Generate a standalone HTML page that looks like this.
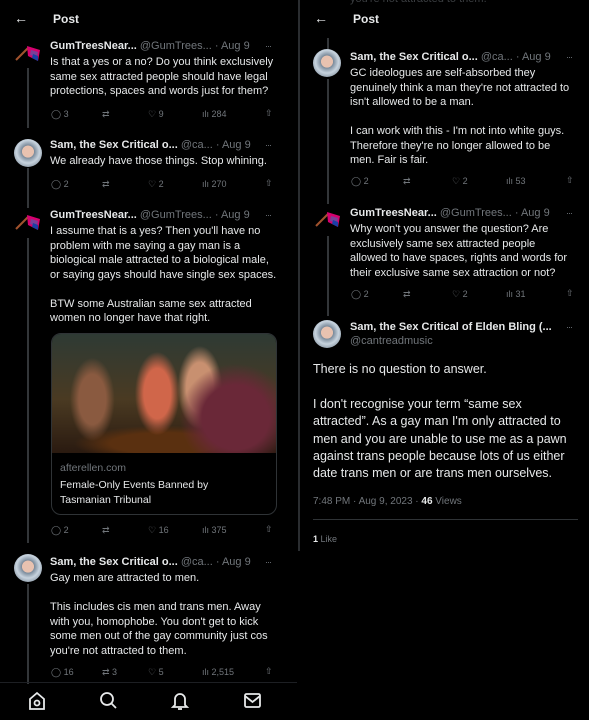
<!DOCTYPE html>
<html><head><meta charset="utf-8"><style>
*{margin:0;padding:0;box-sizing:border-box}
body{width:589px;height:720px;background:#000;position:relative;overflow:hidden;font-family:"Liberation Sans",sans-serif;color:#e7e9ea}
.a{position:absolute;white-space:nowrap}
.t{font-size:11px;line-height:14.5px}
.n{font-weight:bold;font-size:11px}
.g{color:#71767b}
.dots{position:absolute;color:#71767b;font-size:9px;letter-spacing:-1px}
.av{position:absolute;width:28px;height:28px;border-radius:50%;background:radial-gradient(circle at 50% 45%,#e8c2b0 0 28%,#7a8a9a 30%,#c7d3de 55%,#5c6b7a 100%)}
.act{position:absolute;font-size:9px;color:#71767b}
.vl{position:absolute;width:2px;background:#333639}
</style></head><body>
<!-- LEFT PANEL -->
<div class="a" style="left:14px;top:10px;font-size:14px">←</div>
<div class="a" style="left:53px;top:12px;font-size:12px;font-weight:bold">Post</div>

<div class="vl" style="left:27px;top:68px;height:60px"></div>
<svg class="a" style="left:14px;top:42px" width="28" height="22"><line x1="2" y1="18" x2="14" y2="6" stroke="#a0522d" stroke-width="2"/><path d="M13 4 L26 8 L24 19 L14 14Z" fill="#d6006f"/><path d="M17 8 L24 10 L23 15 L16 13Z" fill="#7b3f98"/><path d="M19 12 L24 14 L24 19 L18 16Z" fill="#1a3fa6"/></svg>
<div class="a n" style="left:50px;top:40px">GumTreesNear... <span class="g" style="font-weight:normal">@GumTrees... · Aug 9</span></div>
<div class="dots" style="left:265px;top:41px">···</div>
<div class="a t" style="left:50px;top:55px">Is that a yes or a no? Do you think exclusively<br>same sex attracted people should have legal<br>protections, spaces and words just for them?</div>
<div class="act" style="left:51px;top:109px">◯ 3</div><div class="act" style="left:102px;top:109px">⇄</div><div class="act" style="left:148px;top:109px">♡ 9</div><div class="act" style="left:202px;top:109px">ılı 284</div><div class="act" style="left:265px;top:108px">⇧</div>

<div class="av" style="left:14px;top:139px"></div>
<div class="vl" style="left:27px;top:168px;height:40px"></div>
<div class="a n" style="left:50px;top:139px">Sam, the Sex Critical o... <span class="g" style="font-weight:normal">@ca... · Aug 9</span></div>
<div class="dots" style="left:265px;top:140px">···</div>
<div class="a t" style="left:50px;top:154px">We already have those things. Stop whining.</div>
<div class="act" style="left:51px;top:179px">◯ 2</div><div class="act" style="left:102px;top:179px">⇄</div><div class="act" style="left:148px;top:179px">♡ 2</div><div class="act" style="left:202px;top:179px">ılı 270</div><div class="act" style="left:265px;top:178px">⇧</div>

<svg class="a" style="left:14px;top:211px" width="28" height="22"><line x1="2" y1="18" x2="14" y2="6" stroke="#a0522d" stroke-width="2"/><path d="M13 4 L26 8 L24 19 L14 14Z" fill="#d6006f"/><path d="M17 8 L24 10 L23 15 L16 13Z" fill="#7b3f98"/><path d="M19 12 L24 14 L24 19 L18 16Z" fill="#1a3fa6"/></svg>
<div class="vl" style="left:27px;top:238px;height:305px"></div>
<div class="a n" style="left:50px;top:209px">GumTreesNear... <span class="g" style="font-weight:normal">@GumTrees... · Aug 9</span></div>
<div class="dots" style="left:265px;top:210px">···</div>
<div class="a t" style="left:50px;top:224px">I assume that is a yes? Then you'll have no<br>problem with me saying a gay man is a<br>biological male attracted to a biological male,<br>or saying gays should have single sex spaces.<br><br>BTW some Australian same sex attracted<br>women no longer have that right.</div>
<div class="a" style="left:51px;top:333px;width:226px;height:182px;border:1px solid #2f3336;border-radius:10px;overflow:hidden">
 <div style="height:119px;background:radial-gradient(ellipse 25% 45% at 82% 70%,#6a2838 0 60%,transparent 100%),radial-gradient(ellipse 10% 35% at 18% 55%,#8a5a40 0 60%,transparent 100%),radial-gradient(ellipse 10% 35% at 47% 50%,#d0664a 0 60%,transparent 100%),radial-gradient(ellipse 10% 35% at 66% 45%,#c89070 0 60%,transparent 100%),radial-gradient(ellipse 40% 15% at 50% 92%,#5a3010 0 60%,transparent 100%),linear-gradient(180deg,#2e3a34,#4a3a22 55%,#2a1a10)"></div>
 <div class="g" style="position:absolute;left:8px;top:128px;font-size:10.5px">afterellen.com</div>
 <div style="position:absolute;left:8px;top:144px;font-size:10.5px;line-height:15px">Female-Only Events Banned by<br>Tasmanian Tribunal</div>
</div>
<div class="act" style="left:51px;top:525px">◯ 2</div><div class="act" style="left:102px;top:525px">⇄</div><div class="act" style="left:148px;top:525px">♡ 16</div><div class="act" style="left:202px;top:525px">ılı 375</div><div class="act" style="left:265px;top:524px">⇧</div>

<div class="av" style="left:14px;top:554px"></div>
<div class="vl" style="left:27px;top:584px;height:100px"></div>
<div class="a n" style="left:50px;top:556px">Sam, the Sex Critical o... <span class="g" style="font-weight:normal">@ca... · Aug 9</span></div>
<div class="dots" style="left:265px;top:557px">···</div>
<div class="a t" style="left:50px;top:571px">Gay men are attracted to men.<br><br>This includes cis men and trans men. Away<br>with you, homophobe. You don't get to kick<br>some men out of the gay community just cos<br>you're not attracted to them.</div>
<div class="act" style="left:51px;top:667px">◯ 16</div><div class="act" style="left:102px;top:667px">⇄ 3</div><div class="act" style="left:148px;top:667px">♡ 5</div><div class="act" style="left:202px;top:667px">ılı 2,515</div><div class="act" style="left:265px;top:666px">⇧</div>

<div class="a" style="left:0;top:682px;width:297px;height:1px;background:#1d1f23"></div>
<svg class="a" style="left:27px;top:690px" width="240" height="22" fill="none" stroke="#e7e9ea" stroke-width="1.8">
<path d="M3 9 L10 3 L17 9 V19 H3Z"/><circle cx="10" cy="13" r="2.5"/>
<circle cx="80" cy="9" r="6"/><line x1="84" y1="13" x2="89" y2="18"/>
<path d="M148 15 V9 a5 5 0 0 1 10 0 V15 L160 17 H146Z"/><path d="M151 19 h4"/>
<rect x="218" y="4" width="15" height="13" rx="1.5"/><path d="M218 6 L225.5 12 L233 6"/>
</svg>

<!-- RIGHT PANEL -->
<div class="a" style="left:298px;top:0;width:2px;height:551px;background:#2a2d30"></div>
<div class="a t" style="left:350px;top:-8px;color:#3a3d40">you're not attracted to them.</div>
<div class="a" style="left:314px;top:10px;font-size:14px">←</div>
<div class="a" style="left:353px;top:12px;font-size:12px;font-weight:bold">Post</div>
<div class="vl" style="left:327px;top:38px;height:12px"></div>

<div class="av" style="left:313px;top:49px"></div>
<div class="vl" style="left:327px;top:79px;height:125px"></div>
<div class="a n" style="left:350px;top:51px">Sam, the Sex Critical o... <span class="g" style="font-weight:normal">@ca... · Aug 9</span></div>
<div class="dots" style="left:566px;top:52px">···</div>
<div class="a t" style="left:350px;top:66px">GC ideologues are self-absorbed they<br>genuinely think a man they're not attracted to<br>isn't allowed to be a man.<br><br>I can work with this - I'm not into white guys.<br>Therefore they're no longer allowed to be<br>men. Fair is fair.</div>
<div class="act" style="left:351px;top:176px">◯ 2</div><div class="act" style="left:403px;top:176px">⇄</div><div class="act" style="left:452px;top:176px">♡ 2</div><div class="act" style="left:506px;top:176px">ılı 53</div><div class="act" style="left:566px;top:175px">⇧</div>

<svg class="a" style="left:314px;top:208px" width="28" height="22"><line x1="2" y1="18" x2="14" y2="6" stroke="#a0522d" stroke-width="2"/><path d="M13 4 L26 8 L24 19 L14 14Z" fill="#d6006f"/><path d="M17 8 L24 10 L23 15 L16 13Z" fill="#7b3f98"/><path d="M19 12 L24 14 L24 19 L18 16Z" fill="#1a3fa6"/></svg>
<div class="vl" style="left:327px;top:236px;height:80px"></div>
<div class="a n" style="left:350px;top:207px">GumTreesNear... <span class="g" style="font-weight:normal">@GumTrees... · Aug 9</span></div>
<div class="dots" style="left:566px;top:208px">···</div>
<div class="a t" style="left:350px;top:222px">Why won't you answer the question? Are<br>exclusively same sex attracted people<br>allowed to have spaces, rights and words for<br>their exclusive same sex attraction or not?</div>
<div class="act" style="left:351px;top:289px">◯ 2</div><div class="act" style="left:403px;top:289px">⇄</div><div class="act" style="left:452px;top:289px">♡ 2</div><div class="act" style="left:506px;top:289px">ılı 31</div><div class="act" style="left:566px;top:288px">⇧</div>

<div class="av" style="left:313px;top:320px"></div>
<div class="a n" style="left:350px;top:321px">Sam, the Sex Critical of Elden Bling (...</div>
<div class="a g" style="left:350px;top:335px;font-size:11px">@cantreadmusic</div>
<div class="dots" style="left:566px;top:322px">···</div>
<div class="a" style="left:313px;top:361px;font-size:12.5px;line-height:17.4px">There is no question to answer.<br><br>I don't recognise your term “same sex<br>attracted”. As a gay man I'm only attracted to<br>men and you are unable to use me as a pawn<br>against trans people because lots of us either<br>date trans men or are trans men ourselves.</div>
<div class="a g" style="left:313px;top:496px;font-size:10px">7:48 PM · Aug 9, 2023 · <b style="color:#e7e9ea">46</b> Views</div>
<div class="a" style="left:313px;top:519px;width:265px;height:1px;background:#2f3336"></div>
<div class="a g" style="left:313px;top:534px;font-size:9px"><b style="color:#e7e9ea">1</b> Like</div>
</body></html>
